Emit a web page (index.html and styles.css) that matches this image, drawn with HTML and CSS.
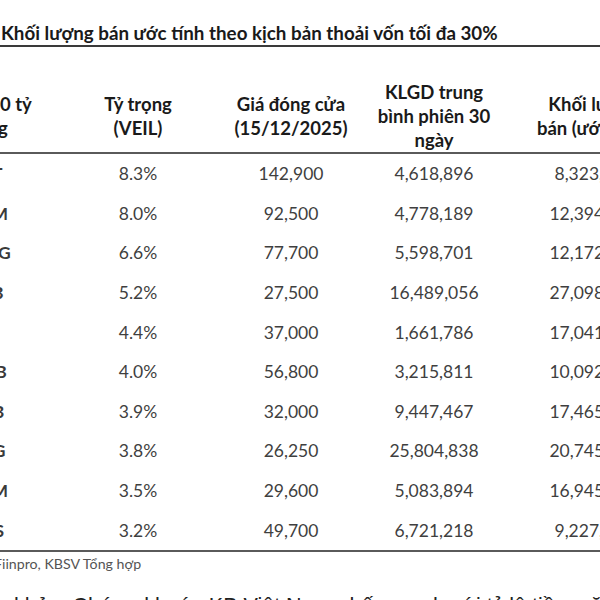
FILE: index.html
```html
<!DOCTYPE html>
<html lang="vi">
<head>
<meta charset="utf-8">
<link rel="stylesheet" href="styles.css">
</head>
<body>
<div class="page">
  <div class="title">Khối lượng bán ước tính theo kịch bản thoải vốn tối đa 30%</div>
  <div class="table-wrap">
    <table class="data">
      <colgroup>
        <col class="c1"><col class="c2"><col class="c3"><col class="c4"><col class="c5">
      </colgroup>
      <thead>
        <tr>
          <th>Bán 300 tỷ<br>đồng</th>
          <th>Tỷ trọng<br>(VEIL)</th>
          <th>Giá đóng cửa<br>(15/12/2025)</th>
          <th>KLGD trung<br>bình phiên 30<br>ngày</th>
          <th>Khối lượng<br>bán (ước tính)</th>
        </tr>
      </thead>
      <tbody>
        <tr><td class="tk">FPT</td><td>8.3%</td><td>142,900</td><td>4,618,896</td><td>8,323,410</td></tr>
        <tr><td class="tk">VHM</td><td>8.0%</td><td>92,500</td><td>4,778,189</td><td>12,394,380</td></tr>
        <tr><td class="tk">MWG</td><td>6.6%</td><td>77,700</td><td>5,598,701</td><td>12,172,520</td></tr>
        <tr><td class="tk">TCB</td><td>5.2%</td><td>27,500</td><td>16,489,056</td><td>27,098,310</td></tr>
        <tr><td class="tk">SSI</td><td>4.4%</td><td>37,000</td><td>1,661,786</td><td>17,041,260</td></tr>
        <tr><td class="tk">MBB</td><td>4.0%</td><td>56,800</td><td>3,215,811</td><td>10,092,140</td></tr>
        <tr><td class="tk">VPB</td><td>3.9%</td><td>32,000</td><td>9,447,467</td><td>17,465,720</td></tr>
        <tr><td class="tk">HPG</td><td>3.8%</td><td>26,250</td><td>25,804,838</td><td>20,745,190</td></tr>
        <tr><td class="tk">VHM</td><td>3.5%</td><td>29,600</td><td>5,083,894</td><td>16,945,880</td></tr>
        <tr><td class="tk">GAS</td><td>3.2%</td><td>49,700</td><td>6,721,218</td><td>9,227,450</td></tr>
      </tbody>
    </table>
  </div>
  <div class="source">Nguồn: Fiinpro, KBSV Tổng hợp</div>
  <p class="body-text">Tham khảo, Chứng khoán KB Việt Nam nhấn mạnh với tỷ lệ tiền mặt hiện tại, quỹ có thể bán ra</p>
</div>
</body>
</html>
```

FILE: styles.css
```css
html, body {
  margin: 0;
  padding: 0;
  background: #ffffff;
}

.page {
  width: 600px;
  height: 600px;
  overflow: hidden;
  font-family: Lato, "Open Sans", sans-serif;
  color: #222;
}

.title {
  margin-top: 21px;
  padding-left: 1px;
  font-weight: 700;
  font-size: 18.8px;
  line-height: 24px;
  color: #1a1a1a;
  white-space: nowrap;
  border-bottom: 2px solid #3a3a3a;
}

.table-wrap {
  margin-top: 25px;
  margin-left: -96px;
  width: 792px;
}

.data {
  border-collapse: collapse;
  table-layout: fixed;
  width: 792px;
}

.c1 { width: 166px; }
.c2 { width: 136px; }
.c3 { width: 170px; }
.c4 { width: 116px; }
.c5 { width: 204px; }

.data th {
  box-sizing: border-box;
  height: 80px;
  padding: 8px 0 0;
  font-size: 18.5px;
  line-height: 24px;
  font-weight: 700;
  color: #1a1a1a;
  text-align: center;
  vertical-align: middle;
  white-space: nowrap;
  border-bottom: 2px solid #5a5a5a;
}

.data td {
  height: 39.6px;
  padding: 0;
  font-size: 17.5px;
  color: #3f3f3f;
  text-align: center;
  vertical-align: middle;
  white-space: nowrap;
}

.data tbody tr:last-child td {
  border-bottom: 2px solid #5a5a5a;
}

.data td.tk {
  font-weight: 700;
  color: #3a3a3a;
}

.source {
  margin-top: 3px;
  margin-left: -55px;
  font-size: 14.2px;
  line-height: 18px;
  color: #555;
  white-space: nowrap;
}

.body-text {
  margin: 18px 0 0 -47px;
  font-family: "Liberation Sans", Arial, sans-serif;
  font-size: 21.5px;
  line-height: 30px;
  color: #222;
  white-space: nowrap;
}
```
